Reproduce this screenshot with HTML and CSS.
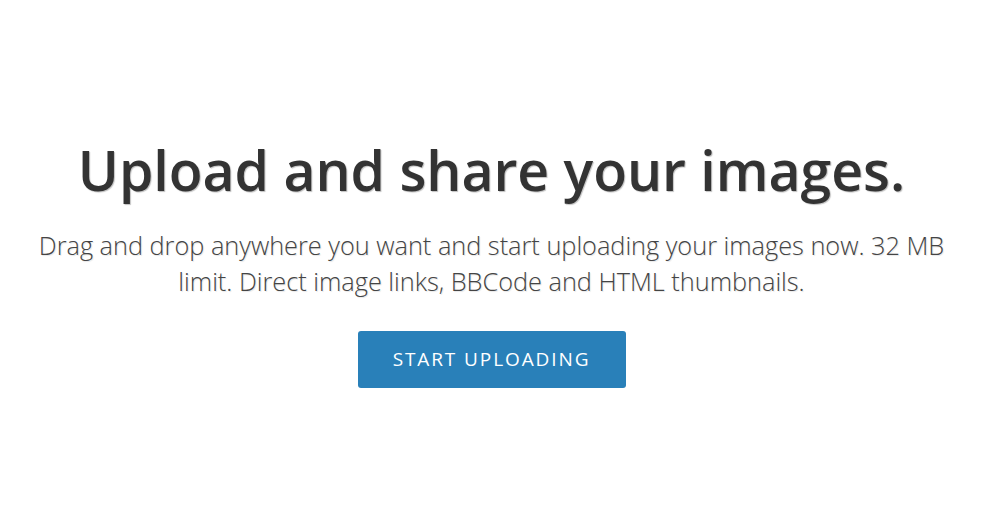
FILE: index.html
```html
<!DOCTYPE html>
<html>
<head>
<meta charset="utf-8">
<link rel="stylesheet" href="styles.css">
</head>
<body>
<main class="hero">
  <div class="hero-inner">
    <h1 class="title">Upload and share your images.</h1>
    <p class="lead">Drag and drop anywhere you want and start uploading your images now. 32 MB limit. Direct image links, BBCode and HTML thumbnails.</p>
    <a class="btn" href="#">START UPLOADING</a>
  </div>
</main>
</body>
</html>
```

FILE: styles.css
```css
html, body {
  margin: 0;
  padding: 0;
  background: #fff;
}
body {
  font-family: "Open Sans", "Liberation Sans", sans-serif;
  color: #333;
}
.hero {
  box-sizing: border-box;
  height: 512px;
  padding-right: 17px;
  display: flex;
  justify-content: center;
}
.hero-inner {
  width: 940px;
  padding-top: 132px;
  text-align: center;
  display: flex;
  flex-direction: column;
  align-items: center;
}
.title {
  margin: 0;
  font-size: 55.3px;
  font-weight: 600;
  line-height: 76px;
  color: #333;
  text-shadow: 1px 1px 1px rgba(0,0,0,0.25);
}
.lead {
  margin: 19px 0 0;
  font-size: 25.3px;
  font-weight: 300;
  line-height: 36px;
  color: #444;
  text-shadow: 1px 1px 1px rgba(0,0,0,0.1);
}
.btn {
  margin-top: 32px;
  display: block;
  width: 268px;
  height: 57px;
  line-height: 57px;
  box-sizing: border-box;
  background: #2980b9;
  color: #fff;
  border-radius: 3px;
  font-size: 19px;
  font-weight: 400;
  letter-spacing: 1.9px;
  text-decoration: none;
}
```
